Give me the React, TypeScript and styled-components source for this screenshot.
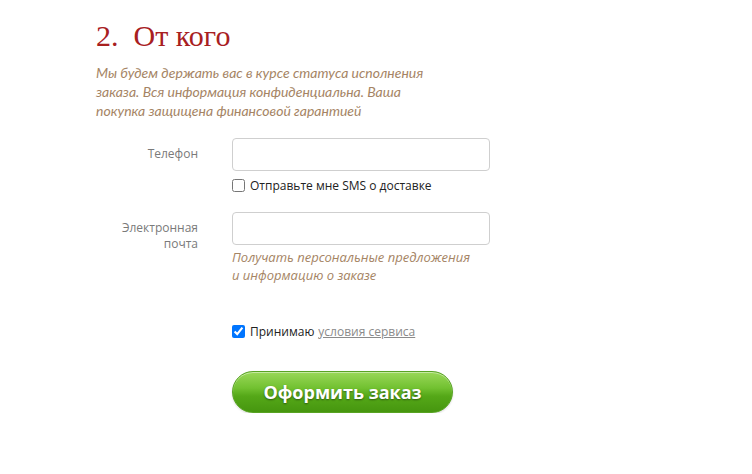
import React from 'react';
import styled, { createGlobalStyle } from 'styled-components';

const GlobalStyle = createGlobalStyle`
  body {
    margin: 0;
    background: #ffffff;
    font-family: "Open Sans", "Liberation Sans", sans-serif;
  }
`;

const Container = styled.div`
  padding: 19px 0 0 96px;
  width: 420px;
`;

const Title = styled.h2`
  font-family: "Liberation Serif", "DejaVu Serif", serif;
  font-size: 30px;
  font-weight: 400;
  color: #a8201f;
  margin: 0 0 10px 0;
  line-height: 34px;
  white-space: pre;
`;

const Intro = styled.p`
  font-family: Lato, "Open Sans", sans-serif;
  font-style: italic;
  font-size: 14px;
  line-height: 19px;
  color: #a58464;
  margin: 0 0 18px 0;
  width: 340px;
`;

const FormGrid = styled.div`
  display: grid;
  grid-template-columns: 102px 258px;
  column-gap: 34px;
  align-items: start;
`;

const Label = styled.label`
  font-size: 12px;
  line-height: 16px;
  color: #7a7a7a;
  text-align: right;
  padding-top: 8px;
`;

const Field = styled.div<{ $gap?: number }>`
  display: flex;
  flex-direction: column;
  margin-bottom: ${p => p.$gap ?? 0}px;
`;

const Input = styled.input`
  box-sizing: border-box;
  width: 258px;
  height: 33px;
  border: 1px solid #cfcfcf;
  border-radius: 4px;
  padding: 0 8px;
  font-size: 14px;
  outline: none;
`;

const CheckRow = styled.label`
  display: flex;
  align-items: center;
  gap: 5px;
  font-size: 12px;
  color: #222;
  margin-top: 6px;
`;

const Box = styled.input`
  margin: 0;
  width: 13px;
  height: 13px;
`;

const Hint = styled.div`
  font-style: italic;
  font-size: 13px;
  line-height: 18px;
  color: #a58464;
  margin-top: 3px;
`;

const Spacer = styled.div``;

const TermsLink = styled.a`
  color: #8a8a8a;
  text-decoration: underline;
  margin-left: 4px;
`;

const SubmitButton = styled.button`
  margin-top: 31px;
  width: 221px;
  height: 42px;
  border-radius: 21px;
  border: 1px solid #58a323;
  background: linear-gradient(to bottom, #9ad858 0%, #72c131 40%, #55a818 60%, #46960f 100%);
  box-shadow: inset 0 1px 0 rgba(255, 255, 255, 0.45), 0 1px 2px rgba(0, 0, 0, 0.15);
  color: #ffffff;
  font-family: "Open Sans", sans-serif;
  font-weight: 700;
  font-size: 18px;
  text-shadow: 0 1px 2px rgba(0, 0, 0, 0.45);
  cursor: pointer;
`;

const App: React.FC = () => {
  return (
    <Container>
      <GlobalStyle />
      <Title>2.  От кого</Title>
      <Intro>
        Мы будем держать вас в курсе статуса исполнения заказа. Вся информация конфиденциальна. Ваша
        покупка защищена финансовой гарантией
      </Intro>
      <FormGrid>
        <Label>Телефон</Label>
        <Field $gap={18}>
          <Input type="tel" />
          <CheckRow>
            <Box type="checkbox" />
            <span>Отправьте мне SMS о доставке</span>
          </CheckRow>
        </Field>
        <Label>
          Электронная
          <br />
          почта
        </Label>
        <Field $gap={33}>
          <Input type="email" />
          <Hint>
            Получать персональные предложения
            <br />и информацию о заказе
          </Hint>
        </Field>
        <Spacer />
        <Field>
          <CheckRow>
            <Box type="checkbox" defaultChecked />
            <span>
              Принимаю<TermsLink href="#">условия сервиса</TermsLink>
            </span>
          </CheckRow>
          <SubmitButton type="button">Оформить заказ</SubmitButton>
        </Field>
      </FormGrid>
    </Container>
  );
};

export default App;
